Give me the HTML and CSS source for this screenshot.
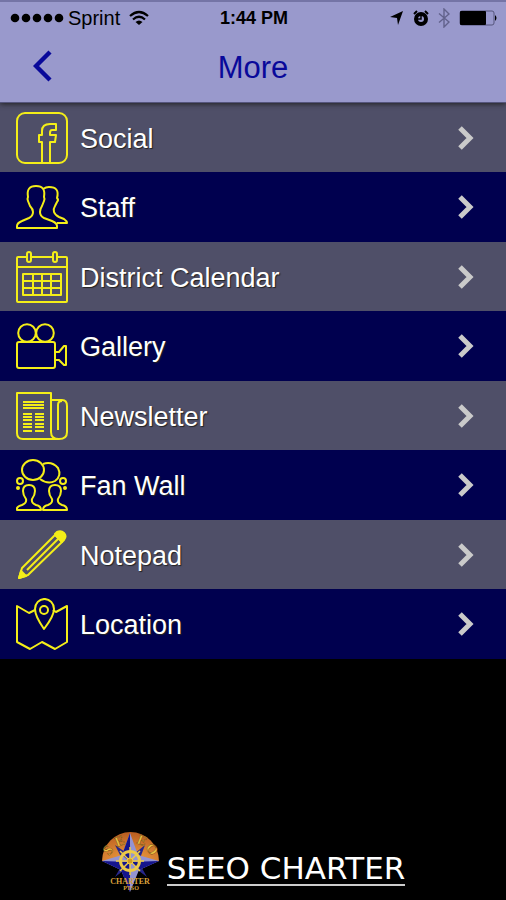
FILE: index.html
```
<!doctype html>
<html lang="en">

<head>
  <meta charset="utf-8">
  <meta name="viewport" content="width=device-width, initial-scale=1.0">
  <title>More</title>
  <link rel="stylesheet" href="styles.css">
</head>

<body>
  <header class="header">
    <div class="status">
      <div class="status-left">
        <svg width="56" height="16" viewBox="0 0 56 16">
          <circle cx="5" cy="8" r="4.3"/><circle cx="16" cy="8" r="4.3"/><circle cx="27" cy="8" r="4.3"/><circle cx="38" cy="8" r="4.3"/><circle cx="49" cy="8" r="4.3"/>
        </svg>
        <span class="carrier">Sprint</span>
        <svg class="wifi" width="20" height="16" viewBox="0 0 20 16">
          <path d="M1 6Q10-2 19 6M4 9.5Q10 4 16 9.5" fill="none" stroke="#000" stroke-width="2.2"/>
          <path d="M6.5 12Q10 9 13.5 12L10 15z"/>
        </svg>
      </div>
      <span class="time">1:44 PM</span>
      <div class="status-right">
        <svg width="14" height="14" viewBox="0 0 14 14"><path d="M13 0L8 14L7 7L0 6z"/></svg>
        <svg width="16" height="16" viewBox="0 0 16 16">
          <circle cx="8" cy="9" r="5" fill="none" stroke="#000" stroke-width="4"/>
          <path d="M8 5v4h-3" fill="none" stroke="#000" stroke-width="1.5"/>
          <path d="M1 4L4 1M12 1l3 3" stroke="#000" stroke-width="2"/>
        </svg>
        <svg width="12" height="20" viewBox="0 0 12 20"><path d="M1 5.5L11 14L6 19V1L11 6L1 14.5" fill="none" stroke="#62628c" stroke-width="1.4"/></svg>
        <svg width="39" height="16" viewBox="0 0 39 16">
          <rect x="1" y="1" width="34" height="14" rx="2" fill="none" stroke="#55557c"/>
          <rect x="1" y="1" width="26" height="14" rx="1"/>
          <path d="M36 5q3 3 0 6z"/>
        </svg>
      </div>
    </div>
    <div class="nav">
      <button class="back" aria-label="Back">
        <svg width="20" height="34" viewBox="0 0 20 34"><path d="M17 3L3 17L17 31" fill="none" stroke="#09099a" stroke-width="4.4"/></svg>
      </button>
      <h1>More</h1>
    </div>
  </header>

  <main>
    <ul class="menu">
      <li><a href="#social">
        <svg class="icon" viewBox="0 0 52 52">
          <rect x="1" y="1" width="50" height="50" rx="8"/>
          <path d="M26 50V30H23V23H26V19Q26 12 34 12H40V18H36Q34 18 34 21V23H40L39 30H34V50"/>
        </svg>
        <span>Social</span>
        <svg class="arrow" viewBox="0 0 16 26"><path d="M2 3L12 13L2 23"/></svg>
      </a></li>
      <li><a href="#staff">
        <svg class="icon" viewBox="0 0 52 52">
          <path d="M1 47V45Q1 42 6 40L13 37Q17 35 17 31Q17 28 14 25L12 20Q11 18 12 16Q10 5 20 5Q30 5 28 16Q29 18 28 20L26 25Q24 28 24 31Q24 35 28 37L36 40Q41 42 41 45V47z"/>
          <path d="M27 8Q30 6 33 6Q44 6 41 17Q43 19 41 21L39 25Q37 28 38 31Q39 34 43 36L48 38Q51 40 51 42H41"/>
        </svg>
        <span>Staff</span>
        <svg class="arrow" viewBox="0 0 16 26"><path d="M2 3L12 13L2 23"/></svg>
      </a></li>
      <li><a href="#calendar">
        <svg class="icon" viewBox="0 0 52 52">
          <path d="M10 6H2Q1 6 1 7V50Q1 51 2 51H50Q51 51 51 50V7Q51 6 50 6H42M16 6H36M1 16H51"/>
          <rect x="11" y="1" width="4" height="10" rx="2"/><rect x="37" y="1" width="4" height="10" rx="2"/>
          <path d="M7 23H45V44H7zM17 23V44M26 23V44M35 23V44M7 30H45M7 37H45"/>
        </svg>
        <span>District Calendar</span>
        <svg class="arrow" viewBox="0 0 16 26"><path d="M2 3L12 13L2 23"/></svg>
      </a></li>
      <li><a href="#gallery">
        <svg class="icon" viewBox="0 0 52 52">
          <circle cx="11" cy="13" r="8.8"/><circle cx="29" cy="13" r="8.8"/>
          <rect x="1" y="22" width="38" height="26" rx="2"/>
          <path d="M39 32H43L48 26H50V45H48L43 40H39"/>
        </svg>
        <span>Gallery</span>
        <svg class="arrow" viewBox="0 0 16 26"><path d="M2 3L12 13L2 23"/></svg>
      </a></li>
      <li><a href="#newsletter">
        <svg class="icon" viewBox="0 0 52 52">
          <path d="M35 42V3H1V43Q1 49 7 49H43Q51 49 51 42V16Q51 10 46 10H35M35 42Q35 49 43 49M42 40V15Q42 11 46 11"/>
          <path d="M7 12H28M7 15H28M7 18H28M7 24H16M7 27H16M7 30H16M7 34H16M7 37H16M7 41H16M19 24H28M19 27H28M19 30H28M19 34H28M19 37H28M19 41H28"/>
        </svg>
        <span>Newsletter</span>
        <svg class="arrow" viewBox="0 0 16 26"><path d="M2 3L12 13L2 23"/></svg>
      </a></li>
      <li><a href="#fanwall">
        <svg class="icon" viewBox="0 0 52 52">
          <ellipse cx="17" cy="11" rx="11" ry="10"/>
          <path d="M27 5Q36 2 42 9Q46 17 39 22Q32 26 24 20"/>
          <circle cx="4" cy="22" r="3"/><circle cx="47" cy="22" r="3"/>
          <circle class="dot" cx="2" cy="29" r="1"/><circle class="dot" cx="49" cy="29" r="1"/>
          <path d="M1 51V49Q2 47 6 46Q11 44 10 40Q7 36 7 32Q7 26 13 26Q19 26 19 32Q19 36 16 40Q15 44 20 46Q25 47 25 51z"/>
          <path d="M27 51Q27 47 32 46Q37 44 36 40Q33 36 33 32Q33 26 39 26Q45 26 45 32Q45 36 42 40Q41 44 46 46Q51 47 51 51z"/>
        </svg>
        <span>Fan Wall</span>
        <svg class="arrow" viewBox="0 0 16 26"><path d="M2 3L12 13L2 23"/></svg>
      </a></li>
      <li><a href="#notepad">
        <svg class="icon" viewBox="0 0 52 52">
          <path d="M3 49L6 39L39 6L46 13L12 46zM11 41L42 10"/>
          <path class="solid" d="M3 49L5 42L10 47zM39 5L41 3Q45 1 48 4Q51 7 48 11L46 13z"/>
        </svg>
        <span>Notepad</span>
        <svg class="arrow" viewBox="0 0 16 26"><path d="M2 3L12 13L2 23"/></svg>
      </a></li>
      <li><a href="#location">
        <svg class="icon" viewBox="0 0 52 52">
          <path d="M19 12L13 15L1 8V44L14 51L26 44L39 51L51 44V8L40 14L37 12"/>
          <path d="M28 31Q19 18 19 11A9 9.5 0 0 1 38 11Q38 18 28 31z"/>
          <circle cx="28" cy="12" r="4"/>
        </svg>
        <span>Location</span>
        <svg class="arrow" viewBox="0 0 16 26"><path d="M2 3L12 13L2 23"/></svg>
      </a></li>
    </ul>
  </main>

  <footer class="footer">
    <svg class="logo" width="60" height="64" viewBox="0 0 60 64">
      <defs>
        <radialGradient id="sun" cx="50%" cy="100%" r="100%">
          <stop offset="0" stop-color="#f0a040"/><stop offset="1" stop-color="#b85c20"/>
        </radialGradient>
      </defs>
      <path d="M1 31A28.5 29 0 0 1 58 31z" fill="url(#sun)"/>
      <!-- compass star -->
      <path d="M14 15L27 24L22 31zM44 15L33 24L38 31zM14 47L26 38L22 33zM46 47L34 38L38 33z" fill="#26268c"/>
      <path d="M29 3L37 25L58 31L38 40L29 62L20 40L1 31L21 25z" fill="#9494d2"/>
      <path d="M29 3V32L21 25zM58 31L29 32L38 40zM29 62V32L20 40zM1 31L29 32L20 40z" fill="#15158c"/>
      <g class="logo-arc">
        <text x="8" y="26" transform="rotate(-50 8 26)">S</text>
        <text x="16" y="17" transform="rotate(-22 16 17)">E</text>
        <text x="35" y="13" transform="rotate(22 35 13)">E</text>
        <text x="44" y="18" transform="rotate(50 44 18)">O</text>
      </g>
      <!-- ship wheel -->
      <g fill="none" stroke="#ecca48">
        <circle cx="29" cy="31" r="9.5" stroke-width="3"/>
        <path d="M29 17V45M15 31H43M19 21L39 41M39 21L19 41" stroke-width="1.5"/>
        <circle cx="29" cy="31" r="3" fill="#d29a25"/>
      </g>
      <text class="logo-name" x="29" y="54">CHARTER</text>
      <text class="logo-sub" x="30" y="60">PTSO</text>
    </svg>
    <a class="brand" href="#home">SEEO CHARTER</a>
  </footer>
</body>
</html>
```
FILE: styles.css
```
* {
  box-sizing: border-box;
}

body {
  margin: 0;
  min-height: 100vh;
  display: flex;
  flex-direction: column;
  background-color: #000;
  font-family: "Liberation Sans", Arial, sans-serif;
}

svg {
  display: block;
  flex: none;
}

.header {
  position: relative; /* keeps the shadow over the list */
  background-color: #9999cc;
  border-top: 2px solid #7474a6;
  border-bottom: 1px solid #55557c;
  box-shadow: 0 1px 5px #222;
}

.status {
  display: grid;
  grid-template-columns: 1fr auto 1fr;
  align-items: center;
  height: 32px;
  padding: 0 8px 0 10px;
}

.status-left,
.status-right {
  display: flex;
  align-items: center;
}

.status-right {
  justify-content: flex-end;
  gap: 9px;
}

.carrier {
  margin-left: 2px;
  font-size: 20px;
}

.wifi {
  margin-left: 9px;
}

.time {
  font-size: 18px;
  font-weight: bold;
}

.nav {
  display: grid;
  grid-template-columns: 1fr auto 1fr;
  align-items: center;
  height: 68px;
  padding-bottom: 4px;
}

.back {
  justify-self: start;
  margin-left: 33px;
  padding: 0;
  border: 0;
  background: none;
  cursor: pointer;
}

h1 {
  margin: 0;
  padding-top: 3px;
  font-size: 31px;
  font-weight: 400;
  color: #09099a;
}

.menu {
  margin: 0;
  padding: 0;
  list-style: none;
}

.menu a {
  display: flex;
  align-items: center;
  gap: 12px;
  min-height: 69px;
  padding: 0 32px 0 16px;
  background-color: #4f4f68;
  color: #fff;
  font-size: 27px;
  text-decoration: none;
  text-shadow: 1px 1px 1px #222;
}

.menu li:nth-child(even) a {
  min-height: 70px;
  background-color: #00004f;
}

.menu span {
  padding-top: 3px;
}

.icon {
  width: 52px;
  height: 52px;
  fill: none;
  stroke: #f4ee18;
  stroke-width: 2;
  stroke-linejoin: round;
}

.icon .solid,
.icon .dot {
  fill: #f4ee18;
}

.arrow {
  width: 16px;
  height: 26px;
  margin-left: auto;
  fill: none;
  stroke: #cacaca;
  stroke-width: 5;
}

.footer {
  display: flex;
  justify-content: center;
  align-items: flex-end;
  gap: 6px;
  margin-top: auto;
  padding-bottom: 6px;
}

.brand {
  margin-bottom: 8px;
  border-bottom: 2px solid #ccc;
  color: #fff;
  font-family: "DejaVu Sans", sans-serif;
  font-size: 31px;
  line-height: 32px;
  text-decoration: none;
}

.logo-arc {
  fill: #ecc242;
  stroke: #6b3b12;
  stroke-width: 0.4;
  font-family: "Liberation Serif", serif;
  font-size: 14px;
  font-weight: bold;
}

.logo-name,
.logo-sub {
  fill: #d9a13a;
  font-family: "Liberation Serif", serif;
  font-weight: bold;
  text-anchor: middle;
}

.logo-name {
  font-size: 8px;
}

.logo-sub {
  font-size: 6px;
}
```
